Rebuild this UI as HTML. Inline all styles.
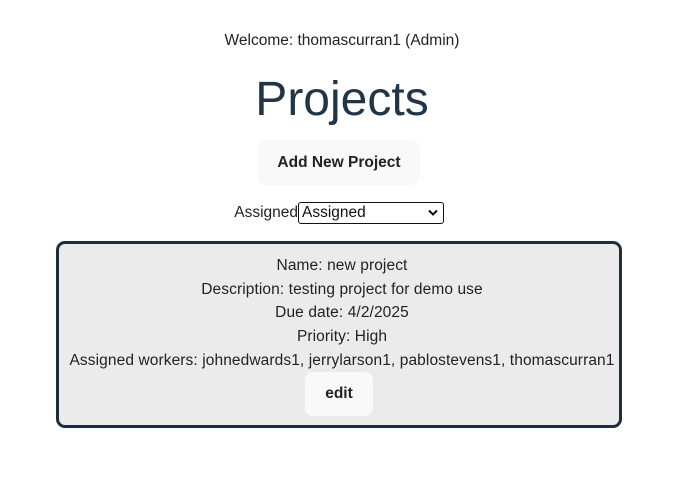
<!DOCTYPE html>
<html><head><style>
body{margin:0;width:684px;height:483px;background:#fff;font-family:"Liberation Sans",sans-serif;color:#213547;position:relative;overflow:hidden}
.a{position:absolute;left:0;width:684px;text-align:center}
</style></head><body>
<div class="a" style="top:32px;font-size:15.5px;color:#222">Welcome: thomascurran1 (Admin)</div>
<div class="a" style="top:72px;font-size:48px;color:#213547">Projects</div>
<div style="position:absolute;left:258px;top:140px;width:162px;height:45px;background:#f9f9f9;border-radius:8px;text-align:center;line-height:45px;font-size:15.5px;font-weight:bold;color:#222">Add New Project</div>
<div style="position:absolute;left:233px;top:204px;font-size:15.5px;color:#222;width:65px;text-align:right">Assigned</div>
<div style="position:absolute;left:298px;top:202px;width:141px;height:20px;border:1.5px solid #111;border-radius:3px;font-size:15.5px;color:#111;line-height:20px;padding-left:3px">Assigned<svg style="position:absolute;right:5px;top:6px" width="10" height="7" viewBox="0 0 10 7"><path d="M1 1.5L5 5.5L9 1.5" fill="none" stroke="#111" stroke-width="2"/></svg></div>
<div style="position:absolute;left:56px;top:241px;width:560px;height:181px;border:3px solid #1f2d3d;border-radius:9px;background:#ebebeb"></div>
<div class="a" style="top:254px;font-size:15.5px;line-height:23.7px;color:#222;letter-spacing:0.1px">Name: new project<br>Description: testing project for demo use<br>Due date: 4/2/2025<br>Priority: High<br>Assigned workers: johnedwards1, jerrylarson1, pablostevens1, thomascurran1</div>
<div style="position:absolute;left:305px;top:372px;width:68px;height:44px;background:#f9f9f9;border-radius:8px;text-align:center;line-height:44px;font-size:15.5px;font-weight:bold;color:#222">edit</div>
</body></html>
